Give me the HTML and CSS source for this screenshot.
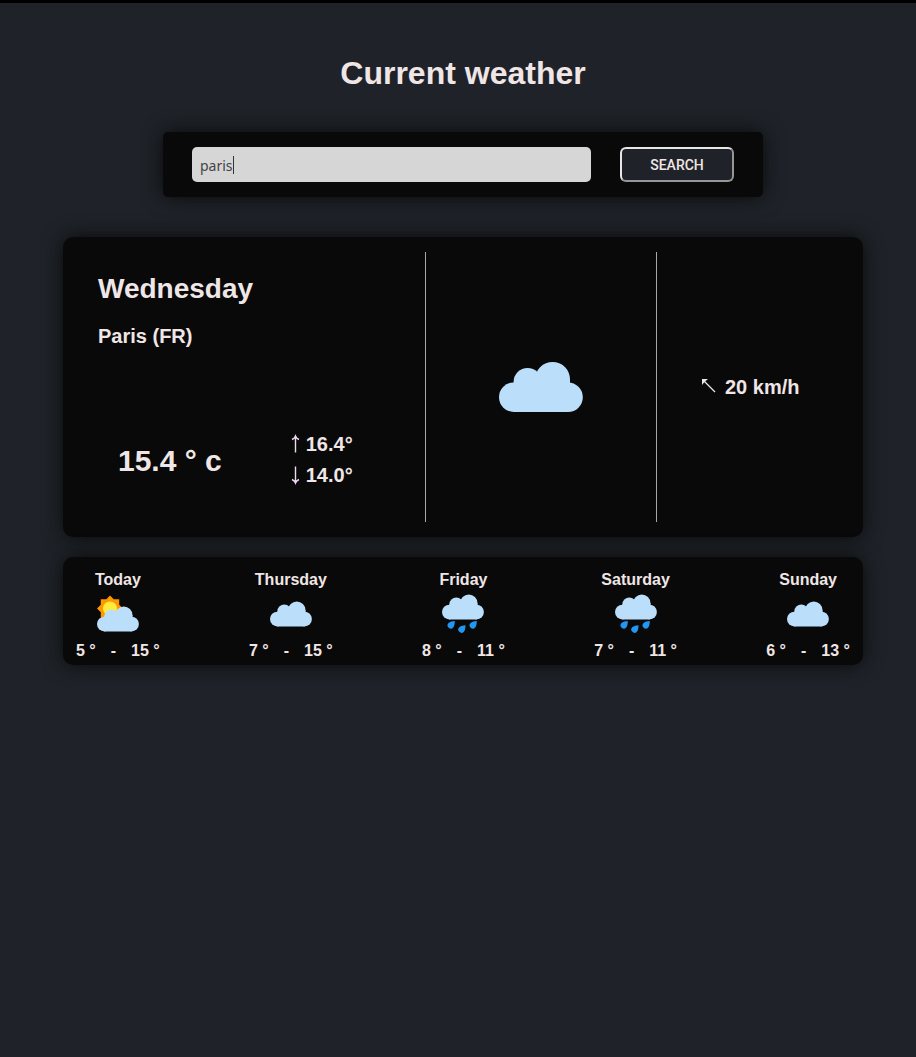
FILE: index.html
```html
<!DOCTYPE html>
<html lang="en">
<head>
<meta charset="utf-8">
<meta name="viewport" content="width=device-width, initial-scale=1">
<title>Current weather</title>
<link rel="stylesheet" href="styles.css">
</head>
<body>
<svg class="defs" aria-hidden="true">
  <symbol id="cloud-shape" viewBox="0 0 48 48">
    <circle cx="10.4" cy="29.1" r="7.4"/>
    <circle cx="37.5" cy="29.1" r="7.4"/>
    <circle cx="17.3" cy="21.5" r="7"/>
    <circle cx="29.8" cy="20.2" r="8.7"/>
    <path d="M10.3 21.7V36.5H37.5V29L38.5 21.7V20.2H17z"/>
  </symbol>
  <symbol id="cloudy" viewBox="0 0 48 48">
    <use href="#cloud-shape" width="48" height="48" fill="#bbdefb"/>
  </symbol>
  <symbol id="partly" viewBox="0 0 48 48">
    <path fill="#ff9800" d="M16 5.5l3.7 3.8H25.200v5.500L29 18.500l-3.800 3.700v5.500H19.700L16 31.500l-3.700-3.800H6.800V22.200L3 18.500l3.800-3.700V9.300h5.500z"/>
    <circle cx="16" cy="18.500" r="7" fill="#ffeb3b"/>
    <use href="#cloud-shape" y="5" width="48" height="48" fill="#bbdefb"/>
  </symbol>
  <symbol id="rain" viewBox="0 0 48 48">
    <use href="#cloud-shape" y="-7" width="48" height="48" fill="#bbdefb"/>
    <g fill="#2196f3">
      <path id="drop" d="M15.800 31c-2.500.2-4.800.7-6.300 2.100a3.200 3.200 0 1 0 4.700 4.400c1.300-1.600 1.600-4.200 1.600-6.500z"/>
      <use href="#drop" x="10.700" y="4.200"/>
      <use href="#drop" x="22"/>
    </g>
  </symbol>
</svg>

<main class="page">
  <h1 class="title">Current weather</h1>

  <form class="search card">
    <div class="search-field">
      <input class="search-input" type="text" aria-label="City" value="paris">
      <span class="caret"></span>
    </div>
    <button class="search-button" type="button">SEARCH</button>
  </form>

  <section class="current card">
    <div class="summary">
      <h2 class="day">Wednesday</h2>
      <h3 class="city">Paris (FR)</h3>
      <div class="temps">
        <p class="temp-now">15.4 ° c</p>
        <div class="temp-range">
          <p class="reading"><svg class="arrow" viewBox="0 0 11 20" role="img" aria-label="High"><path d="M5.500 18.500V2M2 5.500Q4.500 4.500 5.500 2Q6.500 4.500 9 5.500"/></svg>16.4°</p>
          <p class="reading"><svg class="arrow" viewBox="0 0 11 20" role="img" aria-label="Low"><path d="M5.500 1.500V18M2 14.500Q4.500 15.500 5.500 18Q6.500 15.500 9 14.500"/></svg>14.0°</p>
        </div>
      </div>
    </div>
    <div class="sky">
      <svg class="sky-icon" role="img" aria-label="Cloudy"><use href="#cloudy"/></svg>
    </div>
    <div class="wind">
      <svg class="wind-arrow" viewBox="0 0 15 15" role="img" aria-label="North-west"><path d="M2 1L14 13"/><path class="tip" d="M1 0H7L4 2.500L3 3.500L1 6z"/></svg>
      <span>20 km/h</span>
    </div>
  </section>

  <section class="forecast card">
    <article class="forecast-day">
      <h4 class="forecast-name">Today</h4>
      <svg class="forecast-icon" role="img" aria-label="Partly cloudy"><use href="#partly"/></svg>
      <p class="forecast-range"><span>5 °</span><span>-</span><span>15 °</span></p>
    </article>
    <article class="forecast-day">
      <h4 class="forecast-name">Thursday</h4>
      <svg class="forecast-icon" role="img" aria-label="Cloudy"><use href="#cloudy"/></svg>
      <p class="forecast-range"><span>7 °</span><span>-</span><span>15 °</span></p>
    </article>
    <article class="forecast-day">
      <h4 class="forecast-name">Friday</h4>
      <svg class="forecast-icon" role="img" aria-label="Rain"><use href="#rain"/></svg>
      <p class="forecast-range"><span>8 °</span><span>-</span><span>11 °</span></p>
    </article>
    <article class="forecast-day">
      <h4 class="forecast-name">Saturday</h4>
      <svg class="forecast-icon" role="img" aria-label="Rain"><use href="#rain"/></svg>
      <p class="forecast-range"><span>7 °</span><span>-</span><span>11 °</span></p>
    </article>
    <article class="forecast-day">
      <h4 class="forecast-name">Sunday</h4>
      <svg class="forecast-icon" role="img" aria-label="Cloudy"><use href="#cloudy"/></svg>
      <p class="forecast-range"><span>6 °</span><span>-</span><span>13 °</span></p>
    </article>
  </section>
</main>
</body>
</html>
```

FILE: styles.css
```css
* {
  box-sizing: border-box;
  margin: 0;
}

body {
  min-height: 100vh;
  border-top: 3px solid #000;
  background: #1f2329;
  color: #f0e6e6;
  font-family: "Liberation Sans", Arial, sans-serif;
  font-weight: 700;
}

.defs {
  position: absolute;
  width: 0;
  height: 0;
}

.page {
  display: flex;
  flex-direction: column;
  align-items: center;
  padding: 50px 10px 40px 20px;
}

.title {
  font-size: 32px;
  line-height: 40px;
}

.card {
  width: 100%;
  max-width: 800px;
  border-radius: 10px;
  background: #090909;
  box-shadow: 0 0 20px #090909;
}

.search {
  display: flex;
  gap: 29px;
  max-width: 600px;
  margin-top: 39px;
  padding: 15px 29px;
  border-radius: 5px;
}

.search-field {
  position: relative;
  flex: 1;
  min-width: 0;
}

.search-input {
  display: block;
  width: 100%;
  height: 35px;
  padding: 2px 8px 0;
  border: 0;
  border-radius: 5px;
  outline: 0;
  background: #d6d6d6;
  color: #444;
  font: 14px "Noto Sans", sans-serif;
  caret-color: transparent;
}

.caret {
  position: absolute;
  top: 9px;
  left: 41px;
  width: 1px;
  height: 18px;
  background: #333;
}

.search-button {
  width: 114px;
  height: 35px;
  border: 2px solid;
  border-color: #e6e6e6 #969696 #969696 #e6e6e6;
  border-radius: 6px;
  background: #1f2329;
  color: #f0e6e6;
  font: 500 14px Roboto, sans-serif;
}

.current {
  display: grid;
  grid-template-columns: 362fr 231fr 207fr;
  min-height: 300px;
  margin-top: 40px;
  padding: 15px 0;
}

.summary {
  display: flex;
  flex-direction: column;
  padding: 20px 35px 35px;
}

.day {
  font-size: 28px;
  line-height: 34px;
}

.city {
  margin-top: 18px;
  font-size: 20px;
  line-height: 24px;
}

.temps {
  display: flex;
  align-items: center;
  gap: 68px;
  margin-top: auto;
  padding: 0 20px;
}

.temp-now {
  padding-top: 3px;
  font-size: 30px;
  line-height: 36px;
}

.temp-range {
  display: grid;
  gap: 7px;
}

.reading {
  display: flex;
  align-items: center;
  gap: 5px;
  font-size: 20px;
  line-height: 24px;
}

.arrow {
  width: 11px;
  height: 20px;
  fill: none;
  stroke: #f0d8f4;
  stroke-width: 1.4;
}

.sky,
.wind {
  display: flex;
  align-items: center;
  justify-content: center;
  border-left: 1px solid #a8a8a8;
}

.sky-icon {
  width: 96px;
  height: 96px;
}

.wind {
  justify-content: flex-start;
  gap: 9px;
  padding-left: 44px;
  font-size: 20px;
}

.wind-arrow {
  width: 15px;
  height: 15px;
  margin-bottom: 2px;
  stroke: #f0e6e6;
  stroke-width: 1.2;
}

.tip {
  fill: #f0e6e6;
  stroke: none;
}

.forecast {
  display: flex;
  justify-content: space-between;
  margin-top: 20px;
  padding: 13px 13px 5px;
}

.forecast-day {
  display: flex;
  flex-direction: column;
  align-items: center;
}

.forecast-name {
  font-size: 16px;
  line-height: 20px;
}

.forecast-icon {
  width: 48px;
  height: 48px;
}

.forecast-range {
  display: flex;
  gap: 15px;
  padding-top: 4px;
  font-size: 16px;
  line-height: 18px;
}
```
